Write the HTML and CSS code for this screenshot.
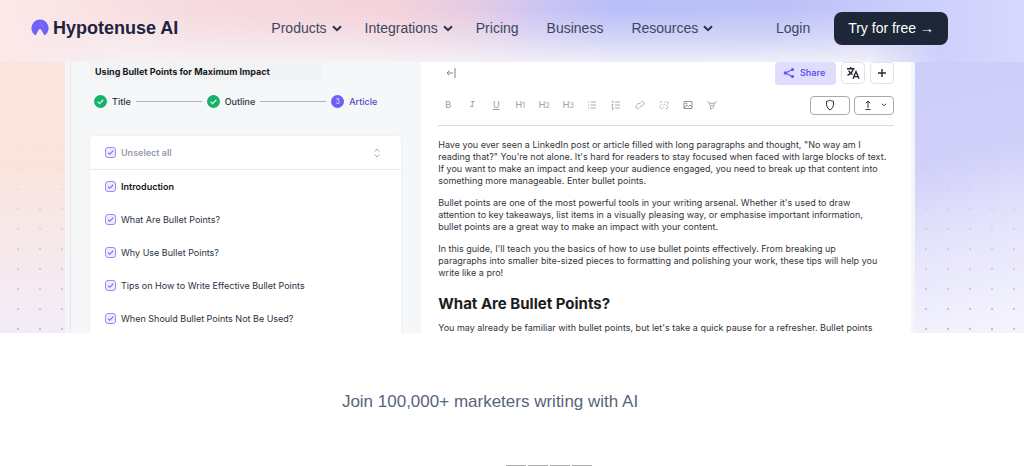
FILE: index.html
```html
<!DOCTYPE html>
<html lang="en">
<head>
<meta charset="utf-8">
<meta name="viewport" content="width=device-width, initial-scale=1">
<title>Hypotenuse AI</title>
<link rel="stylesheet" href="styles.css">
</head>
<body>
<header class="site-header">
  <a class="brand" href="#">
    <svg class="brand-mark" viewBox="0 0 18 18" aria-hidden="true"><path d="M4.600 16.600A8.600 8.600 0 1 1 13.400 16.600L10.600 11.200 9 9.800 7.400 11.200Z" fill="#6f61fa"/><path d="M8.500 2.200l4.600 7.600" stroke="#9087fb" stroke-width=".7"/></svg>
    <span>Hypotenuse AI</span>
  </a>
  <nav class="nav" aria-label="Main">
    <button class="nav-item" type="button">Products <svg class="chev" viewBox="0 0 10 7"><path d="M1 1.2l4 4 4-4"/></svg></button>
    <button class="nav-item" type="button">Integrations <svg class="chev" viewBox="0 0 10 7"><path d="M1 1.2l4 4 4-4"/></svg></button>
    <a class="nav-item" href="#">Pricing</a>
    <a class="nav-item" href="#">Business</a>
    <button class="nav-item" type="button">Resources <svg class="chev" viewBox="0 0 10 7"><path d="M1 1.2l4 4 4-4"/></svg></button>
  </nav>
  <div class="account">
    <a class="nav-item" href="#">Login</a>
    <a class="cta" href="#">Try for free →</a>
  </div>
</header>

<main>
  <section class="hero">
    <div class="side side-left"></div>
    <div class="editor">
      <div class="outline">
        <input class="doc-title" type="text" aria-label="Document title" value="Using Bullet Points for Maximum Impact">
        <ol class="steps">
          <li class="step"><svg class="dot" viewBox="0 0 12 12"><circle cx="6" cy="6" r="6" fill="#17b26a"/><path d="M3.4 6.2l1.8 1.7 3.4-3.5" fill="none" stroke="#d9f7e6" stroke-width="1.1"/></svg>Title</li>
          <li class="bar"></li>
          <li class="step"><svg class="dot" viewBox="0 0 12 12"><circle cx="6" cy="6" r="6" fill="#17b26a"/><path d="M3.4 6.2l1.8 1.7 3.4-3.5" fill="none" stroke="#d9f7e6" stroke-width="1.1"/></svg>Outline</li>
          <li class="bar"></li>
          <li class="step current"><span class="dot number">3</span>Article</li>
        </ol>
        <div class="card">
          <div class="row head"><label class="pick"><input type="checkbox" checked>Unselect all</label>
            <svg class="sort" viewBox="0 0 8 10"><path d="M1.5 3.5L4 1l2.500 2.500M1.500 6.500L4 9l2.500-2.500"/></svg></div>
          <label class="row pick strong"><input type="checkbox" checked>Introduction</label>
          <label class="row pick"><input type="checkbox" checked>What Are Bullet Points?</label>
          <label class="row pick"><input type="checkbox" checked>Why Use Bullet Points?</label>
          <label class="row pick"><input type="checkbox" checked>Tips on How to Write Effective Bullet Points</label>
          <label class="row pick"><input type="checkbox" checked>When Should Bullet Points Not Be Used?</label>
        </div>
      </div>

      <div class="document">
        <div class="topbar">
          <button class="plain" type="button" aria-label="Collapse outline"><svg class="back" viewBox="0 0 10 12"><path d="M1 6h6M3.500 3.500L1 6l2.500 2.500M9 1v10"/></svg></button>
          <div class="actions">
            <button class="share" type="button"><svg class="ic12" viewBox="0 0 12 12"><path d="M9.500 2.500L2.500 6l7 3.500" fill="none" stroke="#6557ec" stroke-width="1.200"/><g fill="#6557ec"><circle cx="9.500" cy="2.500" r="1.600"/><circle cx="2.400" cy="6" r="1.700"/><circle cx="9.500" cy="9.500" r="1.600"/></g></svg>Share</button>
            <button class="square" type="button" aria-label="Translate"><svg class="ic14" viewBox="0 0 14 14"><path d="M1 2.800h7.500M4.700 1v1.800M7.200 3C6.600 5.500 4.400 8 1.500 9.400M2.700 4.600C3.500 6.400 5 7.700 6.600 8.600M7 12.800l3-7.300 3 7.300M8 10.600h4"/></svg></button>
            <button class="square" type="button" aria-label="Add"><svg class="ic14" viewBox="0 0 14 14"><path d="M7 3v8M3 7h8"/></svg></button>
          </div>
        </div>
        <div class="toolbar">
          <div class="tools">
            <button type="button">B</button>
            <button type="button" class="mono">I</button>
            <button type="button" class="under">U</button>
            <button type="button">H<small>1</small></button>
            <button type="button">H<small>2</small></button>
            <button type="button">H<small>3</small></button>
            <button type="button" aria-label="Bulleted list"><svg viewBox="0 0 10 10"><path d="M1 2h1M1 5h1M1 8h1M3.500 2H9M3.500 5H9M3.500 8H9"/></svg></button>
            <button type="button" aria-label="Numbered list"><svg viewBox="0 0 10 10"><path d="M1 1h.8v2M.8 4.500H2L.8 6H2M.8 7.500H2v2H.8M3.800 2H9M3.800 5H9M3.800 8H9"/></svg></button>
            <button type="button" aria-label="Link"><svg viewBox="0 0 10 10"><path d="M5.500 2.500l.8-.8a1.900 1.900 0 0 1 2.500 2.700L7.200 6a1.800 1.800 0 0 1-2.600 0M4.500 7.500l-.8.8a1.900 1.900 0 0 1-2.500-2.700L2.800 4a1.800 1.800 0 0 1 2.600 0"/></svg></button>
            <button type="button" aria-label="Remove link"><svg viewBox="0 0 10 10"><path stroke-dasharray="2.200 .7" d="M5.500 2.500l.8-.8a1.900 1.900 0 0 1 2.500 2.700L7.200 6M4.500 7.500l-.8.8a1.900 1.900 0 0 1-2.500-2.700L2.800 4"/><path d="M2.500 1v1M1 2.500h1M7.500 8v1.500M8 7.500h1.500M4.200 5.800l1.600-1.600"/></svg></button>
            <button type="button" aria-label="Image"><svg class="dark" viewBox="0 0 10 10"><path d="M1 1.500h8v7H1zM1 8l3-3 1.500 1.500L7 5l2 2"/><circle cx="3.200" cy="3.500" r=".5"/></svg></button>
            <button type="button" aria-label="Highlight"><svg viewBox="0 0 10 10"><path d="M1 1l2.200 4.500h3.600L9 1M2.200 3.300h5.600M3.600 5.500v3.700l2.800-1.700v-2"/></svg></button>
          </div>
          <div class="pills">
            <button class="pill" type="button" aria-label="Plagiarism check"><svg class="ic12" viewBox="0 0 12 12"><path d="M2.500 2.300C4 2.300 5 1.800 6 1c1 .8 2 1.300 3.500 1.300.5 4-.5 7-3.500 8.700-3-1.700-4-4.700-3.500-8.700z"/></svg></button>
            <button class="pill" type="button" aria-label="Export"><svg class="ic12" viewBox="0 0 12 12"><path d="M6 2v7M3.800 4.200L6 2l2.200 2.200M3.500 10.500h5"/></svg><svg class="mini" viewBox="0 0 6 4"><path d="M1 .8l2 2 2-2"/></svg></button>
          </div>
        </div>
        <article class="copy">
          <p>Have you ever seen a LinkedIn post or article filled with long paragraphs and thought, "No way am I<br>reading that?" You're not alone. It's hard for readers to stay focused when faced with large blocks of text.<br>If you want to make an impact and keep your audience engaged, you need to break up that content into<br>something more manageable. Enter bullet points.</p>
          <p>Bullet points are one of the most powerful tools in your writing arsenal. Whether it's used to draw<br>attention to key takeaways, list items in a visually pleasing way, or emphasise important information,<br>bullet points are a great way to make an impact with your content.</p>
          <p>In this guide, I'll teach you the basics of how to use bullet points effectively. From breaking up<br>paragraphs into smaller bite-sized pieces to formatting and polishing your work, these tips will help you<br>write like a pro!</p>
          <h2>What Are Bullet Points?</h2>
          <p>You may already be familiar with bullet points, but let's take a quick pause for a refresher. Bullet points</p>
        </article>
      </div>
    </div>
    <div class="side side-right"></div>
  </section>

  <section class="proof">
    <p class="proof-text">Join 100,000+ marketers writing with AI</p>
    <div class="tiles"><span></span><span></span><span></span><span></span></div>
  </section>
</main>
</body>
</html>
```

FILE: styles.css
```css
* { box-sizing: border-box; }
html { height: 100%; }
body {
  margin: 0;
  height: 100%;
  overflow: hidden;
  background: #fff;
  color: #1e2939;
  font-family: "Liberation Sans", Arial, sans-serif;
}
button, input { font: inherit; color: inherit; }
button { border: 0; padding: 0; background: none; }
a { color: inherit; text-decoration: none; }
svg { display: block; flex: none; }
p, h2, ol { margin: 0; padding: 0; }

/* Header */
.site-header {
  position: relative;
  display: flex;
  align-items: center;
  height: 62px;
  padding: 0 76px 6px 31px;
  background: linear-gradient(to right, #fde9e9 0, #f6dade 20%, #f4d3da 38%, #e6cce3 46%, #cbc4f4 53%, #b9bff8 60%, #bbc1f8 76%, #cccffb 90%, #d8d8fe 100%);
}
.site-header::before {
  content: "";
  position: absolute;
  inset: 0;
  background: linear-gradient(to bottom, rgba(245, 243, 246, 0) 15%, rgba(245, 243, 246, .4) 60%, rgba(245, 243, 248, .9) 100%);
  mask-image: linear-gradient(to right, transparent 0, #000 12%, #000 85%, transparent 92%);
}
.site-header > * { position: relative; }
.brand {
  display: flex;
  align-items: center;
  gap: 4px;
  font-size: 18px;
  font-weight: 700;
  color: #1d2340;
}
.brand-mark { width: 18px; height: 18px; }
.nav {
  display: flex;
  gap: 23px;
  margin-left: 93px;
}
.nav-item {
  display: flex;
  align-items: center;
  gap: 5px;
  font-size: 14px;
  line-height: 20px;
  color: #414562;
}
.nav a { margin-right: 5px; }
.chev { width: 10px; height: 7px; fill: none; stroke: #2b3048; stroke-width: 2; }
.account {
  display: flex;
  align-items: center;
  gap: 24px;
  margin-left: auto;
}
.cta {
  padding: 0 14px;
  border-radius: 8px;
  background: #1d2737;
  color: #fff;
  font-size: 14px;
  line-height: 33px;
}

/* Hero */
.hero {
  display: grid;
  grid-template-columns: 65px minmax(0, 1fr) 109px;
  height: 271px;
  overflow: hidden;
}
.side { position: relative; }
.side-left { background: linear-gradient(to bottom, #fbe6dd 0, #fae4dc 35%, #f6e9ee 75%, #f2ecf8 100%); }
.side-right { background: linear-gradient(165deg, #cccdf9 0, #d0d0fa 35%, #e4e3fc 60%, #f6f5fd 100%); }
.side::after {
  content: "";
  position: absolute;
  inset: 0;
  background: radial-gradient(circle, #c2bfca 0, #c2bfca 1px, transparent 1px) left 7px bottom -4px / 22px 20px;
  mask-image: linear-gradient(to bottom, transparent 25%, #000 100%);
}
.side-right::after { background-position: left 0 bottom -4px; }

.editor {
  display: grid;
  grid-template-columns: 355fr 495fr;
  border: 0 solid #f5f5f7;
  border-width: 0 4px 0 5px;
  font-family: Inter, sans-serif;
  font-size: 9px;
  line-height: 12px;
}
.outline {
  padding: 0 20px 0 19px;
  border-left: 1px solid #e3e5e8;
  background: #f5f7f9;
}
.doc-title {
  display: block;
  width: 75%;
  height: 18px;
  padding: 0 5px;
  border: 0;
  background: #f2f3f4;
  color: #17181b;
  font-weight: 700;
}
.steps {
  display: flex;
  align-items: center;
  gap: 5px;
  margin: 15px 24px 0 4px;
  list-style: none;
  color: #303646;
  font-weight: 500;
}
.step { display: flex; align-items: center; gap: 5px; }
.dot { width: 13px; height: 13px; }
.number {
  border-radius: 50%;
  background: #6d5ff6;
  color: #d7d2ff;
  font-size: 7px;
  line-height: 13px;
  text-align: center;
}
.current { color: #5546c8; }
.bar { flex: 1; height: 1px; background: #a9b3c5; }
.card {
  margin-top: 28px;
  border-radius: 4px 4px 0 0;
  background: #fff;
  box-shadow: 0 0 2px #e3e6ea;
}
.row { height: 33px; padding: 0 20px 0 15px; }
.head {
  display: flex;
  align-items: center;
  justify-content: space-between;
  height: 34px;
  border-bottom: 1px solid #eaecf0;
  color: #969eae;
  font-weight: 600;
}
.pick { display: flex; align-items: center; gap: 5px; }
.pick input {
  appearance: none;
  flex: none;
  width: 11px;
  height: 11px;
  margin: 0;
  border: 1px solid #988df7;
  border-radius: 3px;
  background: #efecff url("data:image/svg+xml,%3Csvg xmlns='http://www.w3.org/2000/svg' viewBox='0 0 9 9'%3E%3Cpath d='M2 4.600l1.800 1.700L7.200 2.700' fill='none' stroke='%237465ef' stroke-width='1.100'/%3E%3C/svg%3E") center / 9px 9px no-repeat;
}
.row.pick { color: #2b3040; }
.row.strong { color: #15171c; font-weight: 600; }
.sort { width: 8px; height: 10px; fill: none; stroke: #a5acba; }

.document { padding: 0 17px; background: #fff; }
.topbar, .toolbar { display: flex; align-items: center; justify-content: space-between; }
.topbar { height: 22px; padding-left: 8px; }
.back { width: 10px; height: 12px; fill: none; stroke: #7b8394; }
.actions { display: flex; gap: 5px; }
.share {
  display: flex;
  align-items: center;
  gap: 5px;
  width: 61px;
  height: 23px;
  padding-left: 8px;
  border-radius: 4px;
  background: #dfdcfe;
  color: #6557ec;
  font-weight: 600;
}
.square {
  display: grid;
  place-items: center;
  width: 24px;
  height: 22px;
  border: 1px solid #e1e3e8;
  border-radius: 4px;
}
.ic12 { width: 12px; height: 12px; }
.ic14 { width: 14px; height: 14px; fill: none; stroke: #23272f; stroke-width: 1.4; }
.toolbar {
  height: 42px;
  padding-top: 1px;
  border-bottom: 1px solid #dcdde3;
}
.tools { display: flex; gap: 4px; }
.tools button {
  display: grid;
  grid-auto-flow: column;
  place-content: center;
  align-items: baseline;
  width: 20px;
  color: #999;
}
.tools small { font-size: 7px; }
.tools .mono { font-family: "Liberation Mono", monospace; font-style: italic; }
.tools .under { text-decoration: underline; }
.tools svg { width: 10px; height: 10px; fill: none; stroke: #999; stroke-width: .8; }
.tools .dark { stroke: #777; }
.pills { display: flex; gap: 4px; }
.pill {
  display: flex;
  align-items: center;
  justify-content: center;
  gap: 7px;
  width: 40px;
  height: 19px;
  border: 1px solid #aaa;
  border-radius: 4px;
}
.pill svg { fill: none; stroke: #333; }
.mini { width: 6px; height: 4px; }
.copy { padding-top: 13px; color: #33353a; white-space: nowrap; }
.copy p + p { margin-top: 10px; }
.copy h2 {
  margin: 15px 0 8px;
  color: #1c1d20;
  font-size: 15px;
  line-height: 20px;
  font-weight: 700;
}

/* Social proof */
.proof {
  display: flex;
  flex-direction: column;
  align-items: center;
  gap: 53px;
  padding: 58px 44px 0 0;
}
.proof-text { color: #56657a; font-size: 17px; line-height: 21px; }
.tiles { display: flex; gap: 2px; margin-left: 118px; }
.tiles span { width: 20px; height: 20px; border: 1px solid #aaa; }
```
